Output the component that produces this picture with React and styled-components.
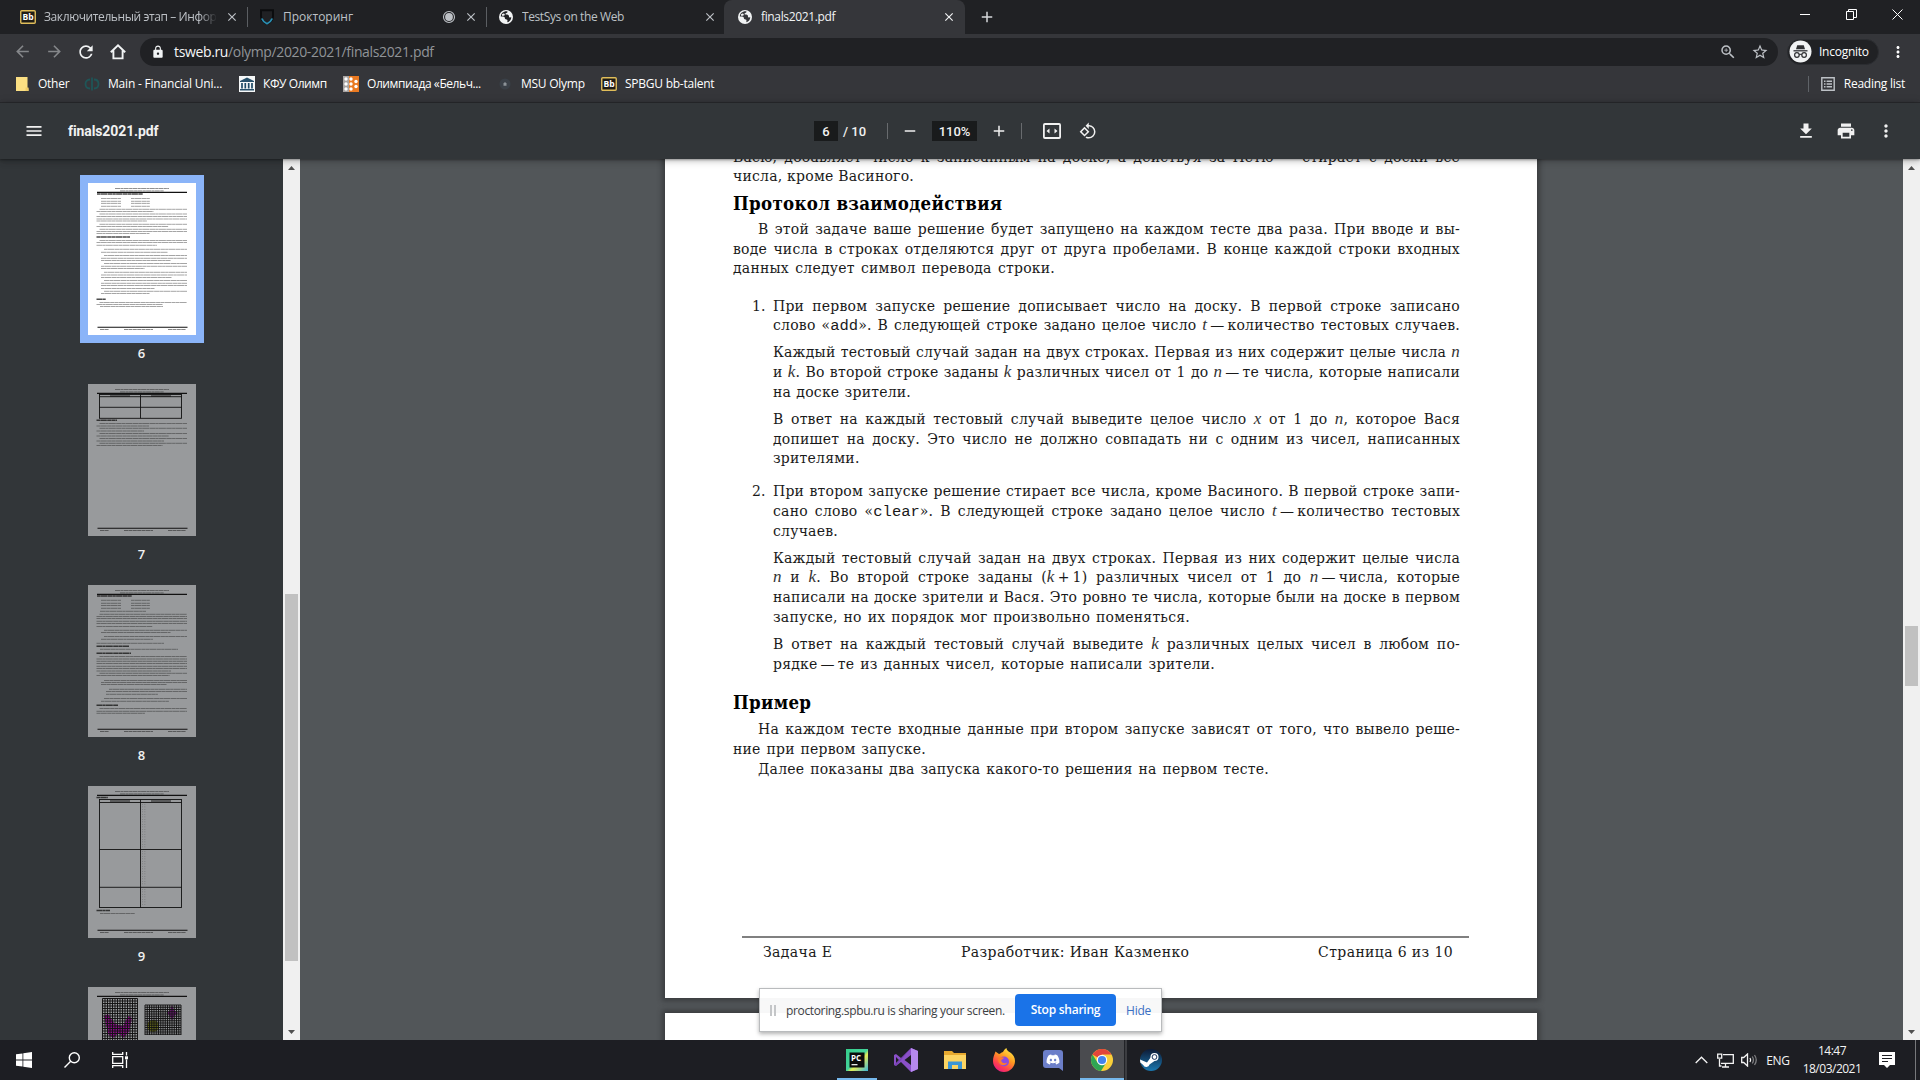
import React from "react";
import styled, { createGlobalStyle, css } from "styled-components";
import {
  MdArrowBack, MdArrowForward, MdRefresh, MdLock, MdZoomIn, MdStarOutline,
  MdMoreVert, MdPrint, MdClose, MdAdd, MdRemove, MdMenu, MdRotate90DegreesCcw,
} from "react-icons/md";
import { FaDiscord } from "react-icons/fa";

const ui = `"Open Sans", "Noto Sans", sans-serif`;
const serif = `"DejaVu Serif", serif`;

const GlobalStyle = createGlobalStyle`
  * { box-sizing: border-box; }
  html, body { margin: 0; padding: 0; overflow: hidden; background: #202124; }
  svg { display: block; flex: none; }
`;

const Screen = styled.div`
  width: 1920px;
  height: 1080px;
  display: flex;
  flex-direction: column;
  overflow: hidden;
  font-family: ${ui};
  font-size: 12px;
  color: #e8eaed;
`;

/* ---------- tab strip ---------- */
const TabStrip = styled.div`
  height: 34px;
  display: flex;
  background: #202124;
  padding-left: 8px;
`;
const Tab = styled.div`
  width: ${(p) => p.$w}px;
  height: 34px;
  display: flex;
  align-items: center;
  padding: 0 ${(p) => p.$pr ?? 8}px 0 ${(p) => p.$pl ?? 12}px;
  color: ${(p) => (p.$active ? "#f1f3f4" : "#bdc1c6")};
  background: ${(p) => (p.$active ? "#35363a" : "transparent")};
  border-radius: 8px 8px 0 0;
  svg.close { margin-left: 8px; }
`;
const TabTitle = styled.span`
  flex: 1;
  min-width: 0;
  margin-left: 8px;
  overflow: hidden;
  white-space: nowrap;
  letter-spacing: ${(p) => p.$ls || 0}px;
  line-height: 18px;
  ${(p) => p.$fade && css`
    -webkit-mask-image: linear-gradient(90deg, #000 90%, transparent);
    mask-image: linear-gradient(90deg, #000 90%, transparent);
  `}
`;
const TabDivider = styled.div`
  width: 1px;
  height: 20px;
  margin-top: 7px;
  background: #5b5e62;
`;
const NewTab = styled.div`
  width: 44px;
  display: flex;
  align-items: center;
  justify-content: center;
  color: #d5d7da;
`;
const WindowButtons = styled.div`
  margin-left: auto;
  display: flex;
  height: 28px;
`;
const WindowButton = styled.div`
  width: 46px;
  display: flex;
  align-items: center;
  justify-content: center;
`;

/* ---------- address row ---------- */
const AddressRow = styled.div`
  height: 35px;
  display: flex;
  align-items: center;
  background: #35363a;
  padding: 0 6px 0 6px;
`;
const NavButton = styled.div`
  width: 32px;
  display: flex;
  justify-content: center;
  color: ${(p) => (p.$off ? "#85878a" : "#f1f3f4")};
`;
const Omnibox = styled.div`
  width: 1638px;
  height: 28px;
  margin-left: 6px;
  border-radius: 14px;
  background: #202124;
  display: flex;
  align-items: center;
  padding: 0 7px 0 11px;
  color: #bdc1c6;
`;
const Url = styled.span`
  flex: 1;
  margin-left: 9px;
  font-size: 14px;
  letter-spacing: -0.36px;
  color: #909498;
  b { font-weight: 400; color: #f5f6f7; }
`;
const OmniIcon = styled.div`
  width: 42px;
  display: flex;
  justify-content: center;
  &:last-child { width: 22px; }
`;
const Incognito = styled.div`
  width: 92px;
  height: 26px;
  margin-left: 9px;
  border-radius: 13px;
  background: #202124;
  border: 1px solid #2b2d31;
  display: flex;
  align-items: center;
  padding-left: 1px;
  span { margin-left: 7px; color: #fff; letter-spacing: -0.25px; }
`;
const RowMenu = styled.div`
  margin-left: 10px;
  color: #fff;
`;

/* ---------- bookmarks ---------- */
const BookmarkBar = styled.div`
  height: 34px;
  display: flex;
  align-items: center;
  padding: 0 15px 4px 14px;
  background: #35363a;
  border-bottom: 1px solid #2a2b2e;
`;
const Bookmark = styled.div`
  width: ${(p) => p.$w}px;
  display: flex;
  align-items: center;
  white-space: nowrap;
  color: #fff;
  span { margin-left: 8px; letter-spacing: ${(p) => p.$ls ?? -0.25}px; }
`;
const ReadingList = styled.div`
  margin-left: auto;
  height: 16px;
  padding-left: 12px;
  border-left: 1px solid #5f6368;
  display: flex;
  align-items: center;
  span { margin-left: 9px; color: #fff; letter-spacing: -0.25px; white-space: nowrap; }
`;

/* ---------- pdf toolbar ---------- */
const PdfBar = styled.div`
  height: 56px;
  display: flex;
  align-items: center;
  background: #323639;
  padding: 0 24px;
  color: #f1f1f1;
  font-family: Roboto, sans-serif;
  font-size: 14px;
  font-weight: 500;
  box-shadow: 0 -2px 8px rgba(0, 0, 0, .09), 0 4px 8px rgba(0, 0, 0, .06), 0 1px 2px rgba(0, 0, 0, .3), 0 2px 6px rgba(0, 0, 0, .15);
  z-index: 2;
`;
const PdfSide = styled.div`
  flex: 1;
  display: flex;
  align-items: center;
  gap: ${(p) => p.$gap}px;
  justify-content: ${(p) => (p.$end ? "flex-end" : "flex-start")};
`;
const PdfTitle = styled.span`
  font-weight: 700;
  letter-spacing: -0.1px;
`;
const PdfCenter = styled.div`
  width: 292px;
  display: flex;
  align-items: center;
`;
const PdfField = styled.div`
  width: ${(p) => p.$w}px;
  height: 20px;
  background: #191b1c;
  text-align: center;
  line-height: 21px;
  font-size: 13px;
`;
const PageTotal = styled.span`
  width: 49px;
  padding-left: 5px;
  font-size: 13px;
  white-space: nowrap;
`;
const PdfDivider = styled.div`
  width: 1px;
  height: 16px;
  background: #686b6e;
`;
const PdfAction = styled.div`
  width: ${(p) => p.$w}px;
  display: flex;
  justify-content: center;
`;

/* ---------- body ---------- */
const Body = styled.div`
  height: 881px;
  display: flex;
  background: #525659;
`;
const Sidebar = styled.div`
  width: 283px;
  background: #323639;
  overflow: hidden;
  display: flex;
  flex-direction: column;
  align-items: center;
  padding: 16px 0 0 1px;
`;
const ThumbItem = styled.div`
  height: 201px;
  flex: none;
  display: flex;
  flex-direction: column;
  align-items: center;
`;
const ThumbFrame = styled.div`
  padding: 8px;
  background: ${(p) => (p.$selected ? "#8ab4f8" : "transparent")};
`;
const ThumbPage = styled.div`
  width: 108px;
  height: 152px;
  overflow: hidden;
  background: ${(p) => (p.$selected ? "#fff" : "#989a9c")};
`;
const ThumbLabel = styled.div`
  margin-top: 1px;
  padding-right: 1px;
  font-size: 13px;
  font-weight: 600;
  line-height: 18px;
  color: #f1f1f1;
`;
const Scrollbar = styled.div`
  width: 17px;
  background: #f0f0f0;
  display: flex;
  flex-direction: column;
  align-items: center;
`;
const ScrollSpace = styled.div`
  height: ${(p) => p.$h}px;
  ${(p) => p.$grow && "flex: 1;"}
`;
const ScrollArrow = styled.div`
  height: 17px;
  display: flex;
  align-items: center;
`;
const ScrollHandle = styled.div`
  width: ${(p) => p.$w}px;
  height: ${(p) => p.$h}px;
  background: #c1c1c1;
`;
const Viewer = styled.div`
  flex: 1;
  padding-left: 365px;
  overflow: hidden;
`;
const Paper = styled.div`
  width: 872px;
  height: ${(p) => p.$h}px;
  margin-bottom: 15px;
  overflow: hidden;
  background: #fff;
  color: #1a1a1a;
  font-family: ${serif};
  font-size: 14px;
  letter-spacing: 0.22px;
  box-shadow: 0 0 5px 3px rgba(30, 32, 34, .45);
  display: flex;
  flex-direction: column;
  padding: 0 77px 0 68px;
`;
const Block = styled.div`
  margin-top: ${(p) => p.$mt || 0}px;
  padding-left: ${(p) => p.$pl || 0}px;
  position: relative;
`;
const Line = styled.div`
  width: ${(p) => (p.$w ? p.$w + "px" : "auto")};
  margin-left: ${(p) => p.$indent || 0}px;
  height: 19.75px;
  line-height: 19.75px;
  white-space: nowrap;
  text-align: justify;
  text-align-last: justify;
  i { font-family: "Liberation Serif", serif; font-size: 17px; color: #333; line-height: 1; }
  code { font-family: "Liberation Mono", monospace; font-size: 15.5px; line-height: 1; letter-spacing: 0; }
`;
const ItemMark = styled.span`
  position: absolute;
  left: 19px;
  top: 0;
  line-height: 19.75px;
  letter-spacing: 0;
`;
const Heading = styled.h2`
  margin: ${(p) => p.$mt}px 0 0;
  width: ${(p) => p.$w}px;
  font-family: "DejaVu Serif Condensed", "DejaVu Serif", serif;
  font-size: 18.5px;
  font-weight: 700;
  line-height: 26px;
  color: #000;
  white-space: nowrap;
  letter-spacing: 0.32px;
`;
const PaperFooter = styled.div`
  width: 727px;
  margin: 156px 0 0 9px;
  padding: 4px 16px 0 21px;
  border-top: 2px solid #808080;
  display: flex;
  justify-content: space-between;
  line-height: 20px;
  letter-spacing: 0.38px;
  white-space: nowrap;
`;

/* ---------- sharing bar ---------- */
const ShareBar = styled.div`
  position: absolute;
  left: 759px;
  top: 988px;
  width: 403px;
  height: 44px;
  background: rgba(255, 255, 255, .96);
  border: 1px solid #b9bbbd;
  box-shadow: 0 2px 4px rgba(0, 0, 0, .3);
  display: flex;
  align-items: center;
  padding-left: 10px;
  color: #3c4043;
  z-index: 3;
`;
const Grip = styled.div`
  flex: none;
  width: 6px;
  height: 11px;
  border: solid #c4c6c8;
  border-width: 0 2px;
`;
const ShareText = styled.span`
  flex: none;
  width: 239px;
  padding-left: 10px;
  white-space: nowrap;
  letter-spacing: -0.35px;
`;
const StopButton = styled.div`
  flex: none;
  width: 101px;
  height: 32px;
  border-radius: 4px;
  background: #1a73e8;
  color: #fff;
  font-weight: 600;
  text-align: center;
  line-height: 31px;
  letter-spacing: -0.25px;
`;
const HideLink = styled.span`
  margin-left: 10px;
  color: #3a6fc4;
  letter-spacing: -0.2px;
`;

/* ---------- taskbar ---------- */
const Taskbar = styled.div`
  height: 40px;
  display: flex;
  background: #1d1e23;
`;
const TaskButton = styled.div`
  width: ${(p) => p.$w || 48}px;
  height: 40px;
  display: flex;
  align-items: center;
  justify-content: center;
`;
const TaskApps = styled.div`
  margin-left: 691px;
  display: flex;
  gap: 5px;
`;
const AppButton = styled.div`
  width: 44px;
  height: 40px;
  display: flex;
  align-items: center;
  justify-content: center;
  background: ${(p) => (p.$active ? "#4a4b4f" : "transparent")};
  box-shadow: ${(p) => (p.$active ? "inset 0 -2px #76b9ed, 1px 0 #222327, 3px 0 #3c3d41" : "none")};
  ${(p) => p.$running && css`
    background: linear-gradient(#76b9ed, #76b9ed) center bottom / 40px 2px no-repeat;
  `}
`;
const Tray = styled.div`
  margin-left: auto;
  display: flex;
  align-items: center;
  color: #f4f4f4;
`;
const TrayItem = styled.div`
  width: ${(p) => p.$w}px;
  display: flex;
  justify-content: center;
  letter-spacing: -0.35px;
`;
const Clock = styled.div`
  width: 74px;
  text-align: center;
  line-height: 18px;
  letter-spacing: -0.5px;
`;
const ShowDesktop = styled.div`
  width: 5px;
  height: 40px;
  margin-left: 10px;
  border-left: 1px solid #77787b;
`;

/* ---------- drawings ---------- */
const BbIcon = () => (
  <svg width="16" height="14" viewBox="0 0 16 14">
    <rect x=".75" y=".75" width="14.5" height="12.5" rx="1" fill="#1f1c16" stroke="#e0bd5a" strokeWidth="1.4" />
    <text x="8" y="10.3" fontSize="8.5" fontWeight="700" fill="#fff" textAnchor="middle" fontFamily="Open Sans">Bb</text>
  </svg>
);
const ShieldIcon = () => (
  <svg width="16" height="18" viewBox="0 0 16 18">
    <path d="M2 2.200h12v6c0 3.500-2.500 6-6 7.600C4.500 14.200 2 11.700 2 8.200z" fill="none" stroke="#0b0c0e" strokeWidth="2" />
    <path d="M2.800 10.500c1 2.600 2.800 4.200 5.200 5.300 2.400-1.100 4.200-2.700 5.200-5.300" fill="none" stroke="#2b8fb3" strokeWidth="1.800" />
  </svg>
);
const GlobeIcon = ({ hole }) => (
  <svg width="16" height="16" viewBox="0 0 16 16">
    <circle cx="8" cy="8" r="7" fill="#f1f3f4" />
    <path d="M9.200 2.300c.8.900-.3 1.500-1.200 2-.9.400-.5 1.300.4 1.300 1.500 0 2.800.6 2.600 1.900-.2 1.100 1.200 1 2.300.8-.2 2.600-1.600 4.400-3.800 5-.5-.8.400-1.800-.3-2.600-.7-.6-2.200-.3-2.300-1.500 0-1.100-.7-1.800-1.900-1.800H2.800C2.900 4.600 5.400 2 9.200 2.300z" fill={hole} />
    <path d="M4 5.200c1.200-1 2.500-.8 2.800.2.200.9-1.100 1.600-2.800 1.400z" fill="#f1f3f4" />
  </svg>
);
const RecordIcon = () => (
  <svg width="14" height="14" viewBox="0 0 14 14">
    <circle cx="7" cy="7" r="5.500" fill="none" stroke="#bdc1c6" strokeWidth="1.100" />
    <circle cx="7" cy="7" r="3.900" fill="#bdc1c6" />
  </svg>
);
const HomeIcon = () => (
  <svg width="18" height="18" viewBox="0 0 18 18" fill="none" stroke="#f1f3f4" strokeWidth="1.900">
    <path d="M1.800 9.300 9 2.300l7.200 7M4.400 7.500v7.900h9.200V7.500" />
  </svg>
);
const IncognitoIcon = () => (
  <svg width="23" height="23" viewBox="0 0 23 23">
    <circle cx="11.500" cy="11.500" r="11" fill="#f1f3f4" />
    <path d="M8.200 5.200h6.600l1.200 4.100H7z" fill="#303134" />
    <path d="M4.500 10.800h14" stroke="#303134" strokeWidth="1.300" />
    <g fill="none" stroke="#303134" strokeWidth="1.200"><circle cx="7.900" cy="15" r="2.300" /><circle cx="15.100" cy="15" r="2.300" /><path d="M10.200 14.600q1.300-.7 2.600 0" /></g>
  </svg>
);
const FolderNote = () => (
  <svg width="16" height="16" viewBox="0 0 16 16">
    <path d="M2 1h11.500v11l1 .5V15H2z" fill="#fbdf83" /><path d="M11.500 11.500H14.500V15h-3z" fill="#f0cd68" />
  </svg>
);
const PhiIcon = () => (
  <svg width="16" height="16" viewBox="0 0 16 16" fill="none" stroke="#1f5557" strokeWidth="1.800">
    <path d="M8 1.500v13M6 3.500C3 3.500 1.500 5.600 1.500 8S3 12.500 6 12.500M10 3.500c3 0 4.500 2.100 4.500 4.500S13 12.500 10 12.500" />
  </svg>
);
const KfuIcon = () => (
  <svg width="16" height="16" viewBox="0 0 16 16">
    <rect width="16" height="16" fill="#f6f8f9" />
    <path d="M1 5 8 1.500 15 5v1H1zM1 13h14v1.500H1z" fill="#28516b" />
    <path d="M3 7v5.500M6.300 7v5.500M9.700 7v5.500M13 7v5.500" stroke="#1e4a66" strokeWidth="1.700" />
  </svg>
);
const BelchIcon = () => (
  <svg width="16" height="16" viewBox="0 0 16 16">
    <rect width="8" height="16" fill="#a8a4a2" /><rect x="6" width="10" height="16" fill="#ea7a22" />
    {[[3, 3], [8, 3], [3, 8], [13, 5.500], [8, 8], [3, 13], [8, 13], [13, 10.500]].map(([x, y]) => <circle key={x + "-" + y} cx={x} cy={y} r="1.700" fill="#fff" />)}
  </svg>
);
const MsuIcon = () => (
  <svg width="16" height="16" viewBox="0 0 16 16">
    <circle cx="8" cy="8" r="5.500" fill="#3a4048" /><path d="M6.500 9.800V7.600L8 6l1.500 1.600v2.200z" fill="#8c9298" />
  </svg>
);
const ReadIcon = () => (
  <svg width="14" height="14" viewBox="0 0 14 14" fill="none" stroke="#bdc1c6" strokeWidth="1.400">
    <path d="M.8.8h12.400v12.400H.8z" /><path d="M3 4.200h1.500M3 7h1.500M3 9.800h1.500M5.600 4.200H11M5.600 7H11M5.600 9.800H11" />
  </svg>
);
const FitIcon = () => (
  <svg width="20" height="20" viewBox="0 0 20 20">
    <rect x="1.900" y="3" width="16.200" height="14" rx="1" fill="none" stroke="#f1f1f1" strokeWidth="1.800" />
    <path d="M4.500 10 7.500 7.500v5zM15.500 10l-3-2.500v5z" fill="#f1f1f1" />
  </svg>
);
const DownloadIcon = () => (
  <svg width="20" height="20" viewBox="0 0 24 24" fill="#f1f1f1"><path d="M19 9h-4V3H9v6H5l7 7 7-7zM5 18v2h14v-2H5z" /></svg>
);
const ArrowMark = ({ down }) => (
  <svg width="7" height="4" viewBox="0 0 7 4"><path d={down ? "M0 0h7L3.500 4z" : "M0 4h7L3.500 0z"} fill="#505050" /></svg>
);

/* miniature pages: [x1, x2, y] strokes imitate lines of print */
const row = (a, b, y, bold) => ({ a, b, y, bold });
const rows = (a, b, ys) => ys.map((y, i) => row(i === 0 ? a + 3 : a, i === ys.length - 1 ? b - 14 - ((y * 7) % 30) : b, y));
const specRows = (ys) => ys.flatMap((y) => [row(13, 33, y), row(43, 62, y)]);

const page6 = [
  row(9, 55, 11, true), ...specRows([15.500, 18.300, 20.400, 23.300]),
  ...rows(8.500, 99, [26.300, 28.500]), ...rows(8.500, 99, [31, 33.500, 36, 38]), ...rows(8.500, 99, [41.300, 43.500]),
  ...rows(8.500, 99, [46.300, 48.500, 50.500]), row(8.500, 42, 54, true), ...rows(8.500, 99, [57.500, 59.500, 62.300]),
  ...rows(13, 99, [66.300, 69.300]), ...rows(13, 99, [72.500, 75.300, 77.500]), ...rows(13, 99, [80.500, 83.300, 85.500]),
  ...rows(13, 99, [89.300, 92, 94.500]), ...rows(13, 99, [97.500, 100.300, 102.500, 105.500]), ...rows(13, 99, [108.300, 110.500]),
  row(8.500, 18, 116.300, true), ...rows(8.500, 99, [119.500, 121.500]), row(12, 75, 123.500),
];
const page7 = [
  row(8.500, 29, 36.300, true), ...rows(8.500, 99, [39.500, 42]), ...rows(8.500, 99, [44.300, 47]),
  ...rows(8.500, 99, [49.500, 52]), ...rows(8.500, 99, [54.500, 57]), ...rows(8.500, 99, [59.300, 61.500]),
];
const page8 = [
  row(9, 44, 11, true), ...specRows([15.300, 18.300, 20.500, 23.300]), row(12, 58, 26.300),
  ...rows(8.500, 99, [29.300, 31.500, 33.500, 36.300, 38.500, 41.500]), ...rows(13, 99, [45.300, 47.500]), ...rows(13, 99, [51.500, 54.300]),
  row(8.500, 76, 58.300), row(8.500, 41, 61.300, true), row(12, 90, 64.300), row(8.500, 43, 68.300, true),
  ...rows(8.500, 99, [71.500, 74, 76.300, 78.500, 81.300, 83.500, 86]), ...rows(8.500, 99, [88.300, 90.500]),
  ...rows(13, 99, [95.500, 97.500, 99.500]), ...rows(18, 99, [104.300, 106.500, 109.300]), ...rows(13, 99, [113.500, 116.300]),
  row(8.500, 30, 120.300, true), ...rows(8.500, 99, [123.500, 126.300, 128.300]),
];
const page9 = [row(8.500, 20, 11.500, true), row(8.500, 22, 124.500, true), row(12, 47, 127.500)];

const MiniTable = ({ top, bottom, cuts }) => (
  <g stroke="#111" strokeWidth=".9" fill="none">
    <rect x="11.500" y={top} width="82" height={bottom - top} />
    <path d={`M52.500 ${top}V${bottom} ` + cuts.map((y) => `M11.500 ${y}H93.500`).join(" ")} />
    <path d={`M22 ${top + 1.500}h20M63 ${top + 1.500}h20`} />
  </g>
);
const MiniGrid = ({ x, y, w, h, step }) => {
  let d = "";
  for (let i = 0; i <= w; i += step) d += `M${x + i} ${y}v${h}`;
  for (let j = 0; j <= h; j += step) d += `M${x} ${y + j}h${w}`;
  return <path d={d} stroke="#111" strokeWidth=".95" fill="none" />;
};
const MiniPage = ({ lines = [], children }) => (
  <svg width="108" height="152" viewBox="0 0 108 152">
    <path d="M27 5.500h54M32 7.900h44" stroke="#333" strokeOpacity=".6" strokeWidth=".9" strokeDasharray="5 .4 3 .3" />
    <path d="M9 9.400h90M9.500 144.300h90" stroke="#111" strokeWidth="1.100" />
    {lines.map((l, i) => (
      <path key={i} d={`M${l.a} ${l.y}H${l.b}`} stroke="#111" strokeOpacity={l.bold ? 0.75 : 0.42}
        strokeWidth={l.bold ? 1.500 : 0.9} strokeDasharray={i % 2 ? "5.500 .3 3.200 .3 7 .4" : "3.500 .3 6.500 .4 4.300 .3"} />
    ))}
    <path d="M12 146.500h9M36 146.500h29M80 146.500h18" stroke="#222" strokeOpacity=".6" strokeWidth=".9" strokeDasharray="4 .4" />
    {children}
  </svg>
);
const ColumnTicks = ({ from, to }) => (
  <path d={`M54.500 ${from}V${to}M56.800 ${from}V${to}`} stroke="#222" strokeOpacity=".4" strokeWidth=".7" strokeDasharray=".7 1.800" />
);
const thumbs = [
  { n: 6, selected: true, art: <MiniPage lines={page6} /> },
  { n: 7, art: <MiniPage lines={page7}><MiniTable top={10.500} bottom={34.300} cuts={[12.700, 23.300]} /></MiniPage> },
  { n: 8, art: <MiniPage lines={page8} /> },
  { n: 9, art: <MiniPage lines={page9}><MiniTable top={13.500} bottom={121.500} cuts={[16.500, 63.500, 101.300]} /><ColumnTicks from={18} to={62} /><ColumnTicks from={65} to={99} /><ColumnTicks from={103} to={119} /></MiniPage> },
  { n: 10, art: (
    <MiniPage>
      <path d="M16 29l4-2 7 10 8 2 5-10 4 2-3 14-6 6-4-5-6 5-5-4z" fill="#8a1187" />
      <path d="M79 26l3-3 2-5 2 5 4 3-4 3-2 5-2-5z" fill="#7d2085" /><circle cx="65" cy="39" r="6" fill="#6c6f1c" />
      <MiniGrid x={14.500} y={11.500} w={35} h={42} step={2.500} /><MiniGrid x={57} y={18} w={36} h={30} step={2.250} />
    </MiniPage>
  ) },
];

/* taskbar drawings */
const WindowsIcon = () => (
  <svg width="16" height="16" viewBox="0 0 16 16" fill="#fff"><path d="M0 2.300 6.500 1.400v6.200H0zM7.300 1.300 16 0v7.600H7.300zM0 8.400h6.500v6.200L0 13.700zM7.300 8.400H16V16l-8.700-1.300z" /></svg>
);
const SearchIcon = () => (
  <svg width="16" height="16" viewBox="0 0 16 16" fill="none" stroke="#fff" strokeWidth="1.400"><circle cx="10.300" cy="5.700" r="5" /><path d="M6.700 9.300.5 15.500" /></svg>
);
const TaskViewIcon = () => (
  <svg width="16" height="16" viewBox="0 0 16 16" fill="none" stroke="#fff" strokeWidth="1.300">
    <path d="M.7 0v2.300h10V0M.7 16v-2.300h10V16M.7 4.700h10v6.600H.7zM14.500 0v3.500M14.500 7.500V16" /><rect x="13" y="4.300" width="3" height="3" fill="#fff" stroke="none" />
  </svg>
);
const PyCharmIcon = () => (
  <svg width="22" height="22" viewBox="0 0 22 22">
    <defs><linearGradient id="pc" x1="0" y1="0" x2="1" y2="1"><stop offset="0" stopColor="#35cf8c" /><stop offset=".5" stopColor="#45d39a" /><stop offset=".6" stopColor="#e6ee55" /><stop offset="1" stopColor="#3bb5d9" /></linearGradient></defs>
    <rect width="22" height="22" fill="url(#pc)" /><rect x="3.500" y="3.500" width="15" height="15" fill="#0b0b0b" />
    <text x="5" y="11.500" fontSize="8" fontWeight="700" fill="#fff" fontFamily="Open Sans">PC</text><path d="M5.500 15.700h6" stroke="#fff" strokeWidth="1.200" />
  </svg>
);
const VisualStudioIcon = () => (
  <svg width="24" height="24" viewBox="0 0 24 24">
    <path d="M17 0 24 3v18l-7 3L7 14l-5 4-2-1V7l2-1 5 4z" fill="#8a50c8" /><path d="M17 0 24 3v18l-7 3z" fill="#b588ee" /><path d="M2 9v6l3-3zM17 7v10l-6.500-5z" fill="#1d1e23" /><path d="M17 0 2 18l-2-1 17-17z" fill="#6d38a8" opacity=".6" />
  </svg>
);
const ExplorerIcon = () => (
  <svg width="22" height="18" viewBox="0 0 22 18">
    <path d="M0 0h8l2 2h12v16H0z" fill="#e7a92f" /><path d="M0 4h22v14H0z" fill="#fcd462" /><path d="M4 18v-7.500h14V18h-4v-4H8v4z" fill="#3c96d6" />
  </svg>
);
const FirefoxIcon = () => (
  <svg width="24" height="24" viewBox="0 0 24 24">
    <defs><linearGradient id="ff" x1=".8" y1="0" x2=".2" y2="1"><stop offset="0" stopColor="#fff04a" /><stop offset=".4" stopColor="#ff9a1f" /><stop offset=".75" stopColor="#ff3d50" /><stop offset="1" stopColor="#e4168a" /></linearGradient></defs>
    <path d="M3.500 3.500 7 6c1 0 2-1.500 4-2 .6-1.500 2-3 3.500-4 0 2.500 2.500 3.500 4.500 5 2 1.800 4 4.500 4 8 0 6-5 11-11 11S1 19 1 13c0-3.500 1.200-6 2.500-9.500z" fill="url(#ff)" />
    <circle cx="12" cy="13.500" r="5" fill="#8a4be0" /><path d="M6 11c2-2.500 4-2 6.500-1.200-1 .9-2.500 1.200-3.300 2.700.5 2.500 3 3.500 6 2-1 2.800-4.500 3.500-7 1.800C6.700 15 6 13 6 11z" fill="#ff7a2a" />
  </svg>
);
const DiscordIcon = () => (
  <svg width="20" height="21" viewBox="0 0 20 21"><path d="M3 0h14a3 3 0 0 1 3 3v18l-4-3H3a3 3 0 0 1-3-3V3a3 3 0 0 1 3-3z" fill="#6c7fc9" /><FaDiscord x="3" y="2.500" width="14" height="14" size={14} color="#fff" /></svg>
);
const ChromeIcon = () => (
  <svg width="22" height="22" viewBox="0 0 22 22">
    <circle cx="11" cy="11" r="11" fill="#f9cf3a" />
    <path d="M11 11 1.500 5.500A11 11 0 0 1 20.500 5.500H11z" fill="#e2453a" />
    <path d="M1.500 5.500A11 11 0 0 0 10 22l5.300-8.500H6.500z" fill="#2fa653" />
    <circle cx="11" cy="11" r="5.200" fill="#fff" /><circle cx="11" cy="11" r="4.100" fill="#4383ec" />
  </svg>
);
const SteamIcon = () => (
  <svg width="22" height="22" viewBox="0 0 22 22">
    <defs><linearGradient id="st" x1="0" y1="0" x2="0" y2="1"><stop offset="0" stopColor="#0d1a35" /><stop offset="1" stopColor="#1a78b0" /></linearGradient></defs>
    <circle cx="11" cy="11" r="11" fill="url(#st)" /><path d="M0 10.500 7 13.500l4-5.500 3.500 4-5 3.500a3.300 3.300 0 0 1-6.300.5L.3 13.500z" fill="#fff" />
    <circle cx="14.500" cy="8" r="4" fill="#fff" /><circle cx="14.500" cy="8" r="2.400" fill="#fff" stroke="#16315a" strokeWidth="1" />
  </svg>
);
const stroke = { fill: "none", stroke: "#f4f4f4", strokeWidth: 1.300 };
const ChevronIcon = () => <svg width="13" height="8" viewBox="0 0 13 8" {...stroke}><path d="M.7 7 6.500 1.200 12.300 7" /></svg>;
const NetworkIcon = () => (
  <svg width="17" height="15" viewBox="0 0 17 15" {...stroke}><path d="M6 1.700h10.300v8.600H4M8.500 10.500V14M5 14h7M2.500 6v7h2" /><path d="M.7 1.200h4v4h-4z" /></svg>
);
const SpeakerIcon = () => (
  <svg width="17" height="14" viewBox="0 0 17 14" {...stroke}><path d="M.7 4.500h2L6.500 1v12L2.700 9.500h-2z" /><path d="M9 5q1.300 2 0 4" /><path d="M11.300 3.500q2.300 3.500 0 7M13.500 2q3.500 5 0 10" strokeOpacity=".45" /></svg>
);
const NoticeIcon = () => (
  <svg width="16" height="16" viewBox="0 0 16 16"><path d="M0 0h16v13h-5l-3 3-3-3H0z" fill="#fff" /><path d="M3 3.500h10M3 6.500h10M3 9.500h6" stroke="#1d1e23" strokeWidth="1.200" /></svg>
);

const N = () => <i>n</i>;
const K = () => <i>k</i>;

export default function App() {
  return (
    <>
      <GlobalStyle />
      <Screen>
        <TabStrip>
          <Tab $w={239}><BbIcon /><TabTitle $fade $ls={-0.4}>Заключительный этап – Информатика</TabTitle><MdClose className="close" size={14} /></Tab>
          <TabDivider />
          <Tab $w={238} $pl={11}><ShieldIcon /><TabTitle>Прокторинг</TabTitle><RecordIcon /><MdClose className="close" size={14} /></Tab>
          <TabDivider />
          <Tab $w={237} $pl={11} $pr={7}><GlobeIcon hole="#202124" /><TabTitle $ls={-0.4}>TestSys on the Web</TabTitle><MdClose className="close" size={14} /></Tab>
          <Tab $w={241} $active $pl={13} $pr={9}><GlobeIcon hole="#35363a" /><TabTitle $ls={-0.36}>finals2021.pdf</TabTitle><MdClose className="close" size={14} /></Tab>
          <NewTab><MdAdd size={18} /></NewTab>
          <WindowButtons>
            <WindowButton><svg width="10" height="10"><path d="M0 5.500h10" stroke="#fff" /></svg></WindowButton>
            <WindowButton><svg width="11" height="11" fill="none" stroke="#fff"><path d="M.5 2.500h7v8h-7zM2.500 2.500v-2h8v8h-3" /></svg></WindowButton>
            <WindowButton><svg width="11" height="11"><path d="M.5.5l10 10M10.500.5l-10 10" stroke="#fff" /></svg></WindowButton>
          </WindowButtons>
        </TabStrip>

        <AddressRow>
          <NavButton $off><MdArrowBack size={19} /></NavButton>
          <NavButton $off><MdArrowForward size={19} /></NavButton>
          <NavButton><MdRefresh size={20} /></NavButton>
          <NavButton><HomeIcon /></NavButton>
          <Omnibox>
            <MdLock size={14} color="#f1f3f4" />
            <Url><b>tsweb.ru</b>/olymp/2020-2021/finals2021.pdf</Url>
            <OmniIcon><MdZoomIn size={18} /></OmniIcon>
            <OmniIcon><MdStarOutline size={18} /></OmniIcon>
          </Omnibox>
          <Incognito><IncognitoIcon /><span>Incognito</span></Incognito>
          <RowMenu><MdMoreVert size={18} /></RowMenu>
        </AddressRow>

        <BookmarkBar>
          <Bookmark $w={70}><FolderNote /><span>Other</span></Bookmark>
          <Bookmark $w={155} $ls={-0.2}><PhiIcon /><span>Main - Financial Uni...</span></Bookmark>
          <Bookmark $w={104} $ls={-0.42}><KfuIcon /><span>КФУ Олимп</span></Bookmark>
          <Bookmark $w={154} $ls={-0.42}><BelchIcon /><span>Олимпиада «Бельч...</span></Bookmark>
          <Bookmark $w={104}><MsuIcon /><span>MSU Olymp</span></Bookmark>
          <Bookmark $w={130}><BbIcon /><span>SPBGU bb-talent</span></Bookmark>
          <ReadingList><ReadIcon /><span>Reading list</span></ReadingList>
        </BookmarkBar>

        <PdfBar>
          <PdfSide $gap={24}><MdMenu size={20} /><PdfTitle>finals2021.pdf</PdfTitle></PdfSide>
          <PdfCenter>
            <PdfField $w={24}>6</PdfField><PageTotal>/ 10</PageTotal><PdfDivider />
            <PdfAction $w={44}><MdRemove size={18} /></PdfAction>
            <PdfField $w={45}>110%</PdfField>
            <PdfAction $w={44}><MdAdd size={18} /></PdfAction>
            <PdfDivider />
            <PdfAction $w={60}><FitIcon /></PdfAction>
            <PdfAction $w={12}><MdRotate90DegreesCcw size={18} /></PdfAction>
          </PdfCenter>
          <PdfSide $end $gap={20}><DownloadIcon /><MdPrint size={20} /><MdMoreVert size={20} /></PdfSide>
        </PdfBar>

        <Body>
          <Sidebar>
            {thumbs.map((t) => (
              <ThumbItem key={t.n}>
                <ThumbFrame $selected={t.selected}><ThumbPage $selected={t.selected}>{t.art}</ThumbPage></ThumbFrame>
                {t.n < 10 && <ThumbLabel>{t.n}</ThumbLabel>}
              </ThumbItem>
            ))}
          </Sidebar>
          <Scrollbar>
            <ScrollArrow><ArrowMark /></ScrollArrow>
            <ScrollSpace $h={418} /><ScrollHandle $w={13} $h={367} /><ScrollSpace $grow />
            <ScrollArrow><ArrowMark down /></ScrollArrow>
          </Scrollbar>
          <Viewer>
            <Paper $h={839}>
              <Block $mt={-11.500}>
                <Line>Васю, добавляет число к записанным на доске, а действуя за Петю — стирает с доски все</Line>
                <Line $w={181}>числа, кроме Васиного.</Line>
              </Block>
              <Heading $mt={4} $w={270}>Протокол взаимодействия</Heading>
              <Block $mt={2.900}>
                <Line $indent={25}>В этой задаче ваше решение будет запущено на каждом тесте два раза. При вводе и вы-</Line>
                <Line>воде числа в строках отделяются друг от друга пробелами. В конце каждой строки входных</Line>
                <Line $w={322}>данных следует символ перевода строки.</Line>
              </Block>
              <Block $mt={17.600} $pl={40}>
                <ItemMark>1.</ItemMark>
                <Line>При первом запуске решение дописывает число на доску. В первой строке записано</Line>
                <Line>слово «<code>add</code>». В следующей строке задано целое число <i>t</i>&#8201;—&#8201;количество тестовых случаев.</Line>
              </Block>
              <Block $mt={7.200} $pl={40}>
                <Line>Каждый тестовый случай задан на двух строках. Первая из них содержит целые числа <N /></Line>
                <Line>и <K />. Во второй строке заданы <K /> различных чисел от 1 до <N />&#8201;—&#8201;те числа, которые написали</Line>
                <Line $w={138}>на доске зрители.</Line>
              </Block>
              <Block $mt={7.200} $pl={40}>
                <Line>В ответ на каждый тестовый случай выведите целое число <i>x</i> от 1 до <N />, которое Вася</Line>
                <Line>допишет на доску. Это число не должно совпадать ни с одним из чисел, написанных</Line>
                <Line $w={85}>зрителями.</Line>
              </Block>
              <Block $mt={13.200} $pl={40}>
                <ItemMark>2.</ItemMark>
                <Line>При втором запуске решение стирает все числа, кроме Васиного. В первой строке запи-</Line>
                <Line>сано слово «<code>clear</code>». В следующей строке задано целое число <i>t</i>&#8201;—&#8201;количество тестовых</Line>
                <Line $w={63}>случаев.</Line>
              </Block>
              <Block $mt={7.200} $pl={40}>
                <Line>Каждый тестовый случай задан на двух строках. Первая из них содержит целые числа</Line>
                <Line><N /> и <K />. Во второй строке заданы (<K />&#8201;+&#8201;1) различных чисел от 1 до <N />&#8201;—&#8201;числа, которые</Line>
                <Line>написали на доске зрители и Вася. Это ровно те числа, которые были на доске в первом</Line>
                <Line $w={417}>запуске, но их порядок мог произвольно поменяться.</Line>
              </Block>
              <Block $mt={7.200} $pl={40}>
                <Line>В ответ на каждый тестовый случай выведите <K /> различных целых чисел в любом по-</Line>
                <Line $w={442}>рядке&#8201;—&#8201;те из данных чисел, которые написали зрители.</Line>
              </Block>
              <Heading $mt={15.900} $w={80}>Пример</Heading>
              <Block $mt={4}>
                <Line $indent={25}>На каждом тесте входные данные при втором запуске зависят от того, что вывело реше-</Line>
                <Line $w={193}>ние при первом запуске.</Line>
                <Line $indent={25} $w={511}>Далее показаны два запуска какого-то решения на первом тесте.</Line>
              </Block>
              <PaperFooter><span>Задача E</span><span>Разработчик: Иван Казменко</span><span>Страница 6 из 10</span></PaperFooter>
            </Paper>
            <Paper $h={300} />
          </Viewer>
          <Scrollbar>
            <ScrollArrow><ArrowMark /></ScrollArrow>
            <ScrollSpace $h={450} /><ScrollHandle $w={13} $h={60} /><ScrollSpace $grow />
            <ScrollArrow><ArrowMark down /></ScrollArrow>
          </Scrollbar>
        </Body>

        <ShareBar>
          <Grip /><ShareText>proctoring.spbu.ru is sharing your screen.</ShareText>
          <StopButton>Stop sharing</StopButton><HideLink>Hide</HideLink>
        </ShareBar>

        <Taskbar>
          <TaskButton><WindowsIcon /></TaskButton>
          <TaskButton><SearchIcon /></TaskButton>
          <TaskButton><TaskViewIcon /></TaskButton>
          <TaskApps>
            <AppButton $running><PyCharmIcon /></AppButton>
            <AppButton><VisualStudioIcon /></AppButton>
            <AppButton><ExplorerIcon /></AppButton>
            <AppButton><FirefoxIcon /></AppButton>
            <AppButton><DiscordIcon /></AppButton>
            <AppButton $active><ChromeIcon /></AppButton>
            <AppButton><SteamIcon /></AppButton>
          </TaskApps>
          <Tray>
            <TrayItem $w={24}><ChevronIcon /></TrayItem>
            <TrayItem $w={24}><NetworkIcon /></TrayItem>
            <TrayItem $w={24}><SpeakerIcon /></TrayItem>
            <TrayItem $w={34}>ENG</TrayItem>
            <Clock>14:47<br />18/03/2021</Clock>
            <TrayItem $w={36}><NoticeIcon /></TrayItem>
            <ShowDesktop />
          </Tray>
        </Taskbar>
      </Screen>
    </>
  );
}
